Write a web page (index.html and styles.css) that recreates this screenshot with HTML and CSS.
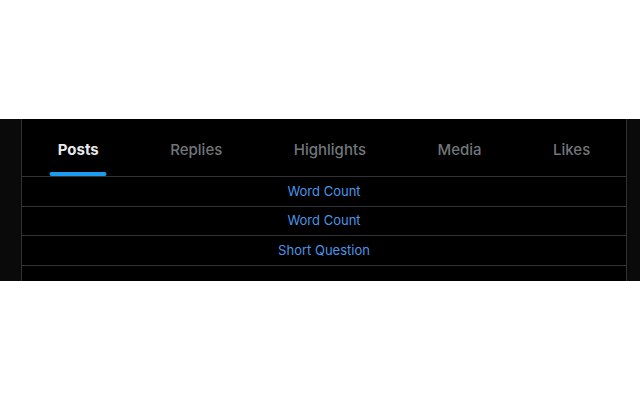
FILE: index.html
```html
<!DOCTYPE html>
<html>
<head>
<meta charset="utf-8">
<link rel="stylesheet" href="styles.css">
</head>
<body>
<div class="band">
  <div class="column">
    <nav class="tabs">
      <div class="tab active"><div class="tab-inner"><span class="label">Posts</span><span class="bar"></span></div></div>
      <div class="tab"><div class="tab-inner"><span class="label">Replies</span></div></div>
      <div class="tab"><div class="tab-inner"><span class="label">Highlights</span></div></div>
      <div class="tab"><div class="tab-inner"><span class="label">Media</span></div></div>
      <div class="tab"><div class="tab-inner"><span class="label">Likes</span></div></div>
    </nav>
    <div class="row"><a class="link">Word Count</a></div>
    <div class="row"><a class="link">Word Count</a></div>
    <div class="row"><a class="link">Short Question</a></div>
    <div class="row last"></div>
  </div>
</div>
</body>
</html>
```
FILE: styles.css
```css
html, body {
  margin: 0;
  padding: 0;
  background: #ffffff;
}
body {
  padding-top: 119px;
  font-family: "Inter", "Roboto", "Liberation Sans", sans-serif;
}
.band {
  background: #0a0a0a;
  height: 162px;
  overflow: hidden;
}
.column {
  margin-left: 21px;
  width: 606px;
  box-sizing: border-box;
  height: 162px;
  background: #000000;
  border-left: 1px solid #2f3336;
  border-right: 1px solid #2f3336;
}
.tabs {
  display: flex;
  height: 57px;
  border-bottom: 1px solid #2f3336;
}
.tab {
  flex: 1 1 auto;
  padding: 0 16px;
  display: flex;
  justify-content: center;
}
.tab-inner {
  position: relative;
  display: flex;
  flex-direction: column;
  align-items: center;
  padding-top: 21px;
}
.label {
  font-size: 15px;
  line-height: 20px;
  font-weight: 500;
  color: #71767b;
  white-space: nowrap;
}
.tab.active .label {
  font-weight: 700;
  color: #e7e9ea;
}
.bar {
  position: absolute;
  bottom: 0;
  left: 50%;
  transform: translateX(-50%);
  min-width: 57px;
  width: 100%;
  height: 4px;
  border-radius: 2px;
  background: #1d9bf0;
}
.row {
  height: 28.5px;
  border-bottom: 1px solid #2f3336;
  display: flex;
  align-items: center;
  justify-content: center;
}
.row.last {
  border-bottom: none;
}
.link {
  font-size: 13px;
  line-height: 17px;
  color: #4a96e8;
  cursor: pointer;
}
```
